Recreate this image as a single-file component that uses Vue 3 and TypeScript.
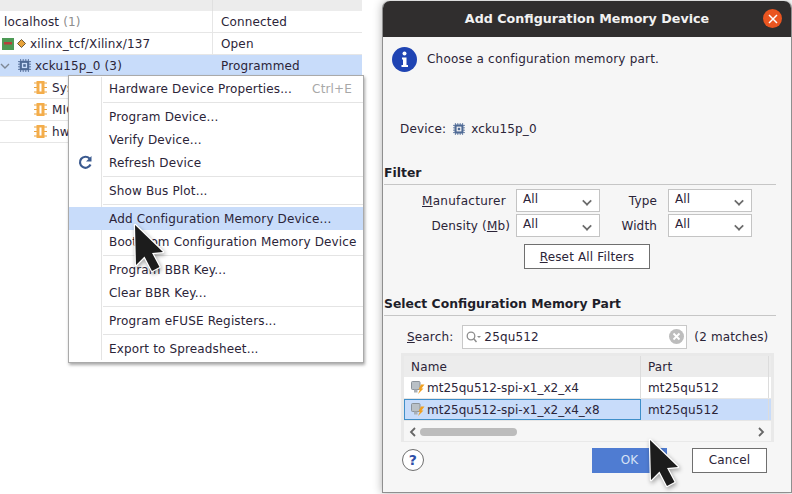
<script setup lang="ts">
type MenuEntry = { label: string; hint?: string; refresh?: boolean; active?: boolean; sep?: boolean };

const menu: MenuEntry[] = [
  { label: "Hardware Device Properties...", hint: "Ctrl+E", sep: true },
  { label: "Program Device..." },
  { label: "Verify Device..." },
  { label: "Refresh Device", refresh: true, sep: true },
  { label: "Show Bus Plot...", sep: true },
  { label: "Add Configuration Memory Device...", active: true },
  { label: "Boot from Configuration Memory Device", sep: true },
  { label: "Program BBR Key..." },
  { label: "Clear BBR Key...", sep: true },
  { label: "Program eFUSE Registers...", sep: true },
  { label: "Export to Spreadsheet..." },
];

const cores = ["System ILA", "MIG", "hw_vio"];
const parts = [
  { name: "mt25qu512-spi-x1_x2_x4", part: "mt25qu512", selected: false },
  { name: "mt25qu512-spi-x1_x2_x4_x8", part: "mt25qu512", selected: true },
];
const chipPins = [3, 6, 9, 12];
</script>

<template>
  <div class="page">
    <section class="tree">
      <div class="tree-head"><span class="c1"></span><span class="c2"></span></div>
      <div class="tree-row">
        <span class="c1 host">localhost <em>(1)</em></span><span class="c2">Connected</span>
      </div>
      <div class="tree-row">
        <span class="c1 target">
          <svg width="12" height="12" viewBox="0 0 12 12">
            <rect width="12" height="12" fill="#4d9a55" />
            <rect x="2" y="4" width="8" height="2.5" fill="#b5413c" />
          </svg>
          <svg width="9" height="9" viewBox="0 0 9 9">
            <path d="M4.5 .5 8.5 4.5 4.5 8.5 .5 4.5Z" fill="#e8a33a" stroke="#6b5a3a" />
          </svg>
          xilinx_tcf/Xilinx/137
        </span>
        <span class="c2">Open</span>
      </div>
      <div class="tree-row selected">
        <span class="c1 device">
          <svg width="10" height="10" viewBox="0 0 10 10">
            <path d="M1 3 5 7 9 3" fill="none" stroke="#7d8794" stroke-width="1.4" />
          </svg>
          <svg class="chip" width="13" height="13" viewBox="0 0 15 15">
            <g stroke="#4f6a95" stroke-width="1">
              <path v-for="p in chipPins" :key="p" :d="`M${p} 0V15M0 ${p}H15`" />
            </g>
            <rect x="2" y="2" width="11" height="11" rx="1" fill="#4f6a95" />
            <rect x="4.5" y="4.5" width="6" height="6" fill="#c9dcf9" />
            <rect x="6" y="6" width="3" height="3" fill="#4f6a95" />
          </svg>
          xcku15p_0 (3)
        </span>
        <span class="c2">Programmed</span>
      </div>
      <div v-for="core in cores" :key="core" class="tree-row">
        <span class="c1 core">
          <svg width="13" height="13" viewBox="0 0 13 13">
            <path d="M0 2H13M0 6.500H13M0 11H13" stroke="#e9a23f" stroke-width="1" />
            <rect x="2.500" y="0" width="8" height="13" fill="#f4ad4a" />
            <rect x="5.500" y="2.500" width="2" height="8" fill="#fff" />
          </svg>
          {{ core }}
        </span>
        <span class="c2"></span>
      </div>
    </section>

    <div class="menu">
      <template v-for="item in menu" :key="item.label">
        <div class="menu-item" :class="{ active: item.active }">
          <span class="gutter">
            <svg v-if="item.refresh" width="15" height="15" viewBox="0 0 15 15">
              <path d="M12.500 9.500A5.500 5.500 0 1 1 11.500 3.500" fill="none" stroke="#3b5a8f" stroke-width="2.200" />
              <path d="M13.500 1V6.500H8Z" fill="#3b5a8f" />
            </svg>
          </span>
          <span class="menu-label">{{ item.label }}</span>
          <span v-if="item.hint" class="menu-hint">{{ item.hint }}</span>
        </div>
        <div v-if="item.sep" class="menu-sep"><span></span></div>
      </template>
    </div>

    <section class="dialog">
      <header class="title">
        <span>Add Configuration Memory Device</span>
        <button class="close" type="button">
          <svg width="10" height="10" viewBox="0 0 10 10">
            <path d="M1 1 9 9M9 1 1 9" stroke="#fff" stroke-width="1.500" />
          </svg>
        </button>
      </header>

      <div class="body">
        <div class="intro">
          <svg width="25" height="25" viewBox="0 0 25 25">
            <circle cx="12.500" cy="12.500" r="12.500" fill="#1f44b3" />
            <circle cx="12.500" cy="6.500" r="2" fill="#fff" />
            <path d="M10 10.500H14.500V18H16V20H9.500V18H11V12.500H10Z" fill="#fff" />
          </svg>
          <span>Choose a configuration memory part.</span>
        </div>

        <div class="device-line">
          <span>Device:</span>
          <svg class="chip" width="12" height="12" viewBox="0 0 15 15">
            <g stroke="#4f6a95" stroke-width="1">
              <path v-for="p in chipPins" :key="p" :d="`M${p} 0V15M0 ${p}H15`" />
            </g>
            <rect x="2" y="2" width="11" height="11" rx="1" fill="#4f6a95" />
            <rect x="4.500" y="4.500" width="6" height="6" fill="#f6f6f6" />
            <rect x="6" y="6" width="3" height="3" fill="#4f6a95" />
          </svg>
          <span>xcku15p_0</span>
        </div>

        <h2 class="section filter-head">Filter</h2>
        <div class="filters">
          <label class="f-a maker"><u>M</u>anufacturer</label>
          <div class="select"><span>All</span><i></i></div>
          <label class="f-b">Type</label>
          <div class="select"><span>All</span><i></i></div>
          <label class="f-a">Density (<u>M</u>b)</label>
          <div class="select"><span>All</span><i></i></div>
          <label class="f-b">Width</label>
          <div class="select"><span>All</span><i></i></div>
        </div>
        <button class="btn reset" type="button"><u>R</u>eset All Filters</button>

        <h2 class="section part-head">Select Configuration Memory Part</h2>
        <div class="search-line">
          <label><u>S</u>earch:</label>
          <div class="search">
            <svg width="15" height="12" viewBox="0 0 15 12">
              <circle cx="5" cy="5" r="3.800" fill="none" stroke="#8d8d8d" stroke-width="1.300" />
              <path d="M7.800 7.800 10.500 11" stroke="#8d8d8d" stroke-width="1.500" />
              <path d="M11 5H15L13 7Z" fill="#8d8d8d" />
            </svg>
            <span class="query">25qu512</span>
            <svg class="clear" width="15" height="15" viewBox="0 0 15 15">
              <circle cx="7.500" cy="7.500" r="7.500" fill="#bdbdbd" />
              <path d="M4.500 4.500 10.500 10.500M10.500 4.500 4.500 10.500" stroke="#fff" stroke-width="1.800" />
            </svg>
          </div>
          <span class="matches">(2 matches)</span>
        </div>

        <div class="grid">
          <div class="grid-head"><span class="g1">Name</span><span class="g2">Part</span></div>
          <div v-for="row in parts" :key="row.name" class="grid-row" :class="{ selected: row.selected }">
            <span class="g1">
              <svg width="14" height="14" viewBox="0 0 14 14">
                <rect x=".5" y=".5" width="8.500" height="8" rx="1" fill="#b9c0c6" stroke="#8b9299" />
                <rect x="3" y="8.500" width="3.500" height="3" fill="#a9b0b6" />
                <path d="M10 3.500H13.500L10.500 7.500H12.500L7 13 9 8.500H7.500Z" fill="#f0a020" />
              </svg>
              <span class="part-name">{{ row.name }}</span>
            </span>
            <span class="g2">{{ row.part }}</span>
          </div>
          <div class="grid-scroll">
            <svg width="7" height="10" viewBox="0 0 7 10"><path d="M6 1 2 5 6 9" fill="none" stroke="#666" stroke-width="1.800" /></svg>
            <span class="thumb"></span>
            <svg class="next" width="7" height="10" viewBox="0 0 7 10"><path d="M1 1 5 5 1 9" fill="none" stroke="#666" stroke-width="1.800" /></svg>
          </div>
        </div>

        <footer class="actions">
          <span class="help">?</span>
          <button class="btn ok" type="button">OK</button>
          <button class="btn cancel" type="button">Cancel</button>
        </footer>
      </div>
    </section>

    <svg class="cursor one" width="36" height="54" viewBox="0 0 36 54">
      <path d="M3 3 4 43 12.500 34.500 20 49 27.500 45 20 31 31 30Z" fill="#1c1c1c" stroke="#fff" stroke-width="2.500" stroke-linejoin="round" paint-order="stroke" />
    </svg>
    <svg class="cursor two" width="36" height="54" viewBox="0 0 36 54">
      <path d="M3 3 4 43 12.500 34.500 20 49 27.500 45 20 31 31 30Z" fill="#1c1c1c" stroke="#fff" stroke-width="2.500" stroke-linejoin="round" paint-order="stroke" />
    </svg>
  </div>
</template>

<style scoped>
.page {
  position: relative;
  display: flex;
  width: 792px;
  height: 494px;
  overflow: hidden;
  background: #fff;
  font: 12px/1 "DejaVu Sans", sans-serif;
  letter-spacing: 0.15px;
  color: #2b2438;
}
.tree {
  flex: 0 0 362px;
  width: 362px;
}
.tree-head {
  display: flex;
  height: 11px;
  background: #ececec;
}
.tree-head .c1 {
  border-right: 1px solid #e0e0e0;
}
.tree-row {
  display: flex;
  height: 22px;
  border-bottom: 1px solid #e6e6e6;
  box-sizing: border-box;
  align-items: center;
}
.c1 {
  display: flex;
  flex: 0 0 213px;
  box-sizing: border-box;
  height: 100%;
  align-items: center;
  border-right: 1px solid #e6e6e6;
  white-space: nowrap;
}
.c2 {
  padding-left: 8px;
}
.selected {
  background: #c8dcfa;
}
.host {
  padding-left: 4px;
}
.host em {
  margin-left: 4px;
  font-style: normal;
  color: #8d8d8d;
}
.target {
  gap: 3px;
  padding-left: 2px;
}
.target svg:nth-child(2) {
  margin-right: 1px;
}
.device {
  border-right: none;
}
.device svg:first-child {
  margin: 0 8px 0 0;
}
.device .chip {
  margin-right: 4px;
}
.core {
  gap: 5px;
  padding-left: 34px;
}
.menu {
  position: absolute;
  left: 68px;
  top: 75px;
  box-sizing: border-box;
  width: 296px;
  height: 288px;
  padding: 1px 0;
  border: 1px solid #aaa;
  background: #fff;
  box-shadow: 1px 2px 3px rgba(0, 0, 0, 0.35);
}
.menu-item {
  display: flex;
  align-items: center;
  height: 23px;
  background-image: linear-gradient(#e4e4e4, #e4e4e4);
  background-repeat: no-repeat;
  background-position: 32px 0;
  background-size: 1px 100%;
}
.menu-item.active {
  background: #c8dcfa;
}
.gutter {
  display: flex;
  flex: 0 0 40px;
  box-sizing: border-box;
  padding-left: 9px;
}
.menu-label {
  flex: 1;
  white-space: nowrap;
}
.menu-hint {
  margin-right: 11px;
  color: #a8a8a8;
}
.menu-sep {
  height: 5px;
  padding: 2px 0 0 34px;
  box-sizing: border-box;
  background: linear-gradient(#e4e4e4, #e4e4e4) no-repeat 32px 0 / 1px 100%;
}
.menu-sep span {
  display: block;
  height: 1px;
  background: #e4e4e4;
}
.dialog {
  position: absolute;
  left: 382px;
  top: 1px;
  display: flex;
  flex-direction: column;
  box-sizing: border-box;
  width: 410px;
  height: 492px;
  border: 1px solid #8f8f8f;
  border-top: none;
  border-radius: 7px 7px 0 0;
  background: #f6f6f6;
  box-shadow: 0 0 10px rgba(0, 0, 0, 0.3);
}
.title {
  display: flex;
  position: relative;
  flex: 0 0 36px;
  align-items: center;
  justify-content: center;
  box-sizing: border-box;
  border-radius: 7px 7px 0 0;
  background: #302e2e;
  color: #f2f2f2;
  font-size: 12.700px;
  letter-spacing: 0;
  font-weight: 700;
}
.close {
  position: absolute;
  right: 9px;
  top: 8px;
  display: flex;
  align-items: center;
  justify-content: center;
  width: 19px;
  height: 19px;
  padding: 0;
  border: none;
  border-radius: 50%;
  background: #ea5520;
}
.body {
  display: flex;
  flex: 1;
  flex-direction: column;
  padding: 10px 0 0 1px;
}
.intro {
  display: flex;
  gap: 10px;
  margin-left: 8px;
  height: 25px;
  letter-spacing: 0.2px;
}
.intro span {
  margin-top: 6px;
}
.device-line {
  display: flex;
  align-items: center;
  gap: 7px;
  margin: 49px 0 0 16px;
  height: 16px;
}
.device-line .chip {
  margin-right: -1px;
}
.section {
  margin: 0;
  padding-bottom: 3px;
  border-bottom: 1px solid #c6c6c6;
  width: 392px;
  font-size: 12.400px;
  line-height: 16px;
  font-weight: 700;
  letter-spacing: 0;
  color: #1e1e2a;
}
.filter-head {
  margin-top: 28px;
}
.filters {
  display: grid;
  grid-template-columns: 132px 84px 68px 84px;
  grid-auto-rows: 23px;
  row-gap: 2px;
  margin-top: 4px;
}
.filters label {
  align-self: center;
  white-space: nowrap;
}
.f-a {
  justify-self: end;
  padding-right: 6px;
}
.f-a.maker {
  padding-right: 10px;
  letter-spacing: 0.3px;
}
.f-b {
  justify-self: end;
  padding-right: 11px;
}
.select {
  display: flex;
  align-items: center;
  justify-content: space-between;
  box-sizing: border-box;
  padding: 0 6px 3px 6px;
  border: 1px solid #c4c4c4;
  background: #fff;
}
.select i {
  width: 6px;
  height: 6px;
  margin: 4px 2px 0 0;
  border-right: 2px solid #6b6b6b;
  border-bottom: 2px solid #6b6b6b;
  transform: rotate(45deg) scale(0.85);
}
.btn {
  box-sizing: border-box;
  padding: 0;
  font: inherit;
  letter-spacing: inherit;
  color: inherit;
  background: #fff;
  border: 1px solid #6f6f6f;
}
.reset {
  width: 126px;
  height: 25px;
  margin: 7px 0 0 140px;
}
.part-head {
  margin-top: 27px;
}
.search-line {
  display: flex;
  align-items: center;
  height: 25px;
  margin: 8px 0 0 23px;
  gap: 7px;
}
.search {
  display: flex;
  flex: 0 0 225px;
  align-items: center;
  box-sizing: border-box;
  height: 24px;
  margin-left: 2px;
  padding: 0 2px 0 3px;
  border: 1px solid #c8c8c8;
  background: #fff;
}
.query {
  flex: 1;
  margin-left: 3px;
}
.grid {
  box-sizing: border-box;
  width: 373px;
  height: 89px;
  margin: 4px 0 0 17px;
  border: 3px solid #e9e9e9;
  background: #fff;
}
.grid-head,
.grid-row {
  display: flex;
  align-items: center;
}
.grid-head {
  height: 21px;
  background: #ececec;
}
.grid-row {
  height: 22px;
  border-bottom: 1px solid #e6e6e6;
  box-sizing: border-box;
}
.part-name {
  letter-spacing: 0;
}
.g1 {
  display: flex;
  flex: 0 0 237px;
  box-sizing: border-box;
  height: 100%;
  align-items: center;
  gap: 2px;
  padding-left: 7px;
  border-right: 1px solid #dcdcdc;
  white-space: nowrap;
}
.g2 {
  display: flex;
  flex: 0 0 128px;
  box-sizing: border-box;
  height: 100%;
  align-items: center;
  padding-left: 7px;
  border-right: 1px solid #dcdcdc;
}
.grid-row.selected .g1 {
  border: 1px solid #3f8fc9;
  padding-left: 6px;
}
.grid-scroll {
  display: flex;
  align-items: center;
  height: 20px;
  padding: 1px 6px 0 5px;
  box-sizing: border-box;
  background: #f6f6f6;
}
.thumb {
  width: 97px;
  height: 8px;
  margin-left: 4px;
  border-radius: 4px;
  background: #bcbcbc;
}
.next {
  margin-left: auto;
}
.actions {
  display: flex;
  align-items: center;
  margin: 5px 0 0 18px;
  height: 26px;
}
.help {
  display: flex;
  align-items: center;
  justify-content: center;
  box-sizing: border-box;
  width: 22px;
  height: 22px;
  border: 1px solid #6f6f6f;
  border-radius: 50%;
  background: #fff;
  color: #2f4fa8;
  font-weight: 700;
  font-size: 14px;
}
.ok {
  width: 75px;
  height: 25px;
  margin-left: 168px;
  border: none;
  background: #4f7cd2;
  color: #d7e2f5;
}
.cancel {
  width: 75px;
  height: 25px;
  margin-left: 25px;
}
.cursor {
  position: absolute;
  filter: drop-shadow(1px 2px 2px rgba(0, 0, 0, 0.35));
}
.cursor.one {
  left: 132px;
  top: 222px;
}
.cursor.two {
  left: 647px;
  top: 437px;
}
</style>
